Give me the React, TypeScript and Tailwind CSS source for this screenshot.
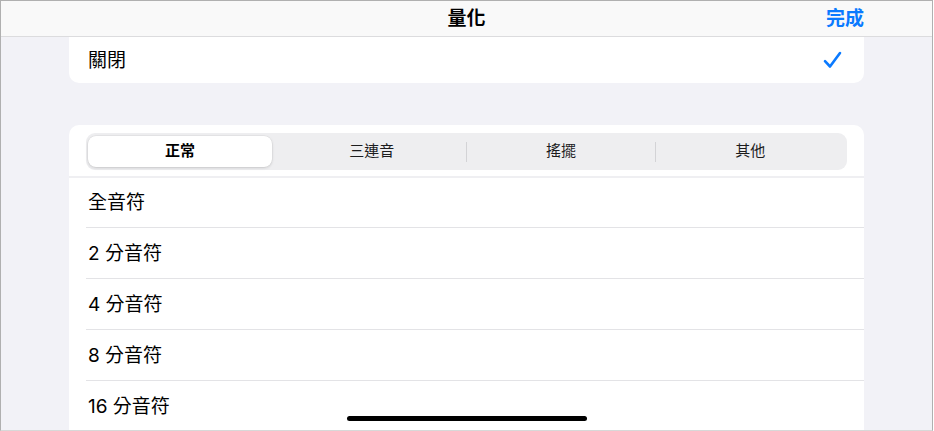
import React from 'react';

const FONT = { fontFamily: '"Inter", "Noto Sans CJK TC", "Noto Sans", sans-serif' };

const segments = ['正常', '三連音', '搖擺', '其他'];
const rows = ['全音符', '2 分音符', '4 分音符', '8 分音符', '16 分音符'];

function Check() {
  return (
    <svg width="19" height="18" viewBox="0 0 19 18" fill="none">
      <path
        d="M2 10.2 L7 15.5 L17 2"
        stroke="#0a7aff"
        strokeWidth="2.6"
        strokeLinecap="round"
        strokeLinejoin="round"
      />
    </svg>
  );
}

function Segmented() {
  return (
    <div className="mx-[17px] h-[37px] rounded-[9px] bg-[#eeeef0] px-[2px] py-[3px] flex">
      {segments.map((label, i) => (
        <div key={label} className="relative flex-1 flex items-center">
          {i === 0 ? (
            <div className="w-[184px] h-full rounded-[8px] bg-white shadow-[0_1px_3px_rgba(0,0,0,0.14),0_0_0_0.5px_rgba(0,0,0,0.06)] flex items-center justify-center text-[15px] font-semibold text-black">
              {label}
            </div>
          ) : (
            <div className="w-full h-full flex items-center justify-center text-[15px] text-[#1c1c1e]">
              {label}
            </div>
          )}
          {i >= 2 && (
            <div className="absolute -left-px top-[6px] h-[20px] w-px bg-[#d3d3d6]" />
          )}
        </div>
      ))}
    </div>
  );
}

export default function App() {
  return (
    <div className="w-[934px] h-[431px] bg-white" style={FONT}>
      <div className="relative w-[933px] h-[431px] border border-[#b0b0b0] border-b-[#d8d8d8] bg-[#f2f2f7] overflow-hidden flex flex-col">
        {/* nav bar */}
        <div className="h-[36px] shrink-0 border-b border-[#dcdcde] bg-[#f9f9f9] grid grid-cols-[1fr_auto_1fr] items-center">
          <div />
          <div className="text-[19px] font-semibold text-black leading-none">量化</div>
          <div className="flex justify-end pr-[68px]">
            <span className="text-[19px] font-semibold text-[#0a7aff] leading-none">完成</span>
          </div>
        </div>

        {/* off row */}
        <div className="mx-[68px] h-[46px] shrink-0 bg-white rounded-b-[10px] flex items-center justify-between pl-[19px] pr-[22px]">
          <span className="text-[19px] text-black pt-[2px]">關閉</span>
          <Check />
        </div>

        {/* note values */}
        <div className="mx-[68px] mt-[42px] flex-1 bg-white rounded-t-[10px] pt-[8px]">
          <Segmented />
          <div className="mt-[6px] h-[2px] bg-[#efeff2]" />
          {rows.map((r, i) => (
            <div
              key={r}
              className={`ml-[17px] border-b border-[#e3e3e6] flex items-center pl-[2px] pt-[2px] text-[19px] text-black ${i === 0 ? 'h-[50px]' : 'h-[51px]'}`}
            >
              {r}
            </div>
          ))}
        </div>

        {/* home indicator */}
        <div className="absolute left-[346px] top-[415px] w-[240px] h-[5px] rounded-full bg-black" />
      </div>
    </div>
  );
}
